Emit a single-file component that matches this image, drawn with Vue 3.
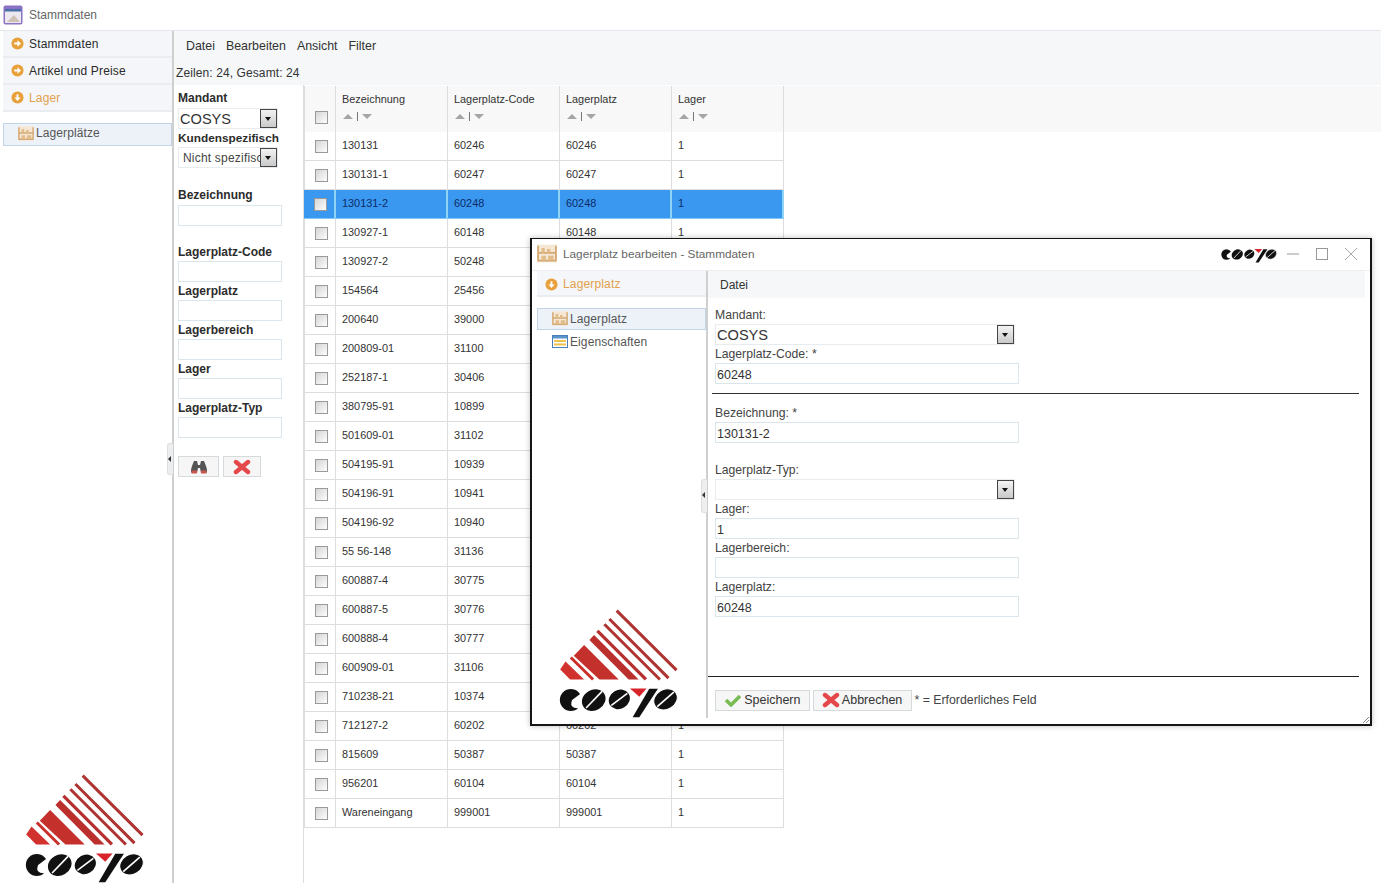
<script setup>
const accordion = [
  { label: 'Stammdaten', open: false },
  { label: 'Artikel und Preise', open: false },
  { label: 'Lager', open: true }
]

const filters = [
  { label: 'Lagerplatz-Code' },
  { label: 'Lagerplatz' },
  { label: 'Lagerbereich' },
  { label: 'Lager' },
  { label: 'Lagerplatz-Typ' }
]

const columns = ['Bezeichnung', 'Lagerplatz-Code', 'Lagerplatz', 'Lager']

// Bezeichnung, Code (Lagerplatz ist gleich dem Code)
const rows = [
  ['130131', '60246'],
  ['130131-1', '60247'],
  ['130131-2', '60248'],
  ['130927-1', '60148'],
  ['130927-2', '50248'],
  ['154564', '25456'],
  ['200640', '39000'],
  ['200809-01', '31100'],
  ['252187-1', '30406'],
  ['380795-91', '10899'],
  ['501609-01', '31102'],
  ['504195-91', '10939'],
  ['504196-91', '10941'],
  ['504196-92', '10940'],
  ['55 56-148', '31136'],
  ['600887-4', '30775'],
  ['600887-5', '30776'],
  ['600888-4', '30777'],
  ['600909-01', '31106'],
  ['710238-21', '10374'],
  ['712127-2', '60202'],
  ['815609', '50387'],
  ['956201', '60104'],
  ['Wareneingang', '999001']
]
</script>

<template>
  <div class="app">
    <!-- gemeinsame Icons -->
    <svg class="defs" aria-hidden="true">
      <symbol id="cosys-word" viewBox="75 275 358 95">
        <ellipse cx="110" cy="316" rx="33" ry="33" fill="#111" />
        <path d="M146 292 L114 316 Q106 332 120 339 L146 343 Z" fill="#fff" />
        <ellipse cx="179" cy="316" rx="37" ry="31" fill="#111" transform="rotate(-30 179 316)" />
        <path d="M156 340 L204 290" stroke="#fff" stroke-width="5" />
        <ellipse cx="256" cy="314" rx="33" ry="28" fill="#111" transform="rotate(-30 256 314)" />
        <path d="M232 332 L280 296" stroke="#fff" stroke-width="5" />
        <path d="M296 368 L316 368 L372 282 L346 282 Z" fill="#111" />
        <path d="M288 281 L338 281 L316 306 Z" fill="#d8232a" />
        <ellipse cx="395" cy="314" rx="37" ry="30" fill="#111" stroke="#fff" stroke-width="3" transform="rotate(-30 395 314)" />
        <path d="M370 336 L420 292" stroke="#fff" stroke-width="5" />
      </symbol>
      <symbol id="cosys-logo" viewBox="60 30 390 340">
        <path d="M248 47 L428 226" stroke="#ae3331" stroke-width="9" />
        <path d="M226 72 L404 250" stroke="#ae3331" stroke-width="9" />
        <path d="M211 88 L378 254" stroke="#ae3331" stroke-width="9" />
        <path d="M190 108 L336 254" stroke="#b5302f" stroke-width="10" />
        <path d="M180 120 L314 254 L284 254 L166 135 Z" fill="#bb2f2d" />
        <path d="M150 150 L254 254 L196 254 L119 183 Z" fill="#c4302c" />
        <path d="M110 188 L177 254" stroke="#c9302c" stroke-width="9" />
        <path d="M78 224 L94 200 L150 254 L108 254 Z" fill="#d2322e" />
        <use href="#cosys-word" x="75" y="275" width="358" height="95" />
      </symbol>
      <symbol id="shelf" viewBox="0 0 18 16">
        <rect x="0" y="0" width="18" height="16" fill="#f5e7d3" />
        <path d="M1 1V15M17 1V15M1 7.5H17M1 14.5H17" stroke="#d3a873" stroke-width="1.6" fill="none" />
        <path d="M4 3h3v4H4zM9 4h3v3H9zM4 10h4v4H4zM10 10h5v4h-5z" fill="#e2bd8c" />
      </symbol>
      <symbol id="props" viewBox="0 0 16 13">
        <rect x="0.5" y="0.5" width="15" height="12" fill="#fff" stroke="#4a7fb8" />
        <rect x="1" y="1" width="14" height="2.5" fill="#5b93cc" />
        <rect x="2" y="5" width="12" height="2" fill="#eec24e" />
        <rect x="2" y="8.5" width="12" height="2" fill="#eec24e" />
      </symbol>
      <symbol id="cross" viewBox="0 0 18 16">
        <path d="M3 3L15 13M15 3L3 13" stroke="#e5484a" stroke-width="4.4" stroke-linecap="round" />
      </symbol>
      <symbol id="check" viewBox="0 0 18 14">
        <path d="M2 7L7 12L16 3" stroke="#79bb55" stroke-width="3.6" fill="none" stroke-linejoin="round" />
      </symbol>
      <symbol id="bullet-right" viewBox="0 0 14 14">
        <circle cx="7" cy="7" r="6.5" fill="#e8a03a" />
        <path d="M3.5 6H7V3.6L10.8 7L7 10.4V8H3.5Z" fill="#fff" />
      </symbol>
      <symbol id="bullet-down" viewBox="0 0 14 14">
        <circle cx="7" cy="7" r="6.5" fill="#e8a03a" />
        <path d="M6 3.5V7H3.6L7 10.8L10.4 7H8V3.5Z" fill="#fff" />
      </symbol>
    </svg>

    <header class="titlebar">
      <svg class="app-icon" viewBox="0 0 20 20">
        <rect x="0.5" y="0.5" width="19" height="19" rx="2" fill="#8a72c4" />
        <rect x="2" y="4" width="16" height="14" fill="#ece8f0" />
        <rect x="2" y="4" width="16" height="2.5" fill="#4a6fa8" />
        <path d="M4 17L11 10L17 17Z" fill="#cfc2b4" />
      </svg>
      <span>Stammdaten</span>
    </header>

    <div class="body">
      <aside class="side">
        <div v-for="item in accordion" :key="item.label" class="acc-head" :class="{ open: item.open }">
          <svg class="bullet"><use :href="item.open ? '#bullet-down' : '#bullet-right'" /></svg>
          <span>{{ item.label }}</span>
        </div>
        <div class="nav-list">
          <div class="nav-item selected">
            <svg class="nav-icon"><use href="#shelf" /></svg>
            <span>Lagerplätze</span>
          </div>
        </div>
        <svg class="logo"><use href="#cosys-logo" /></svg>
      </aside>

      <main class="main">
        <nav class="menubar">
          <span>Datei</span>
          <span>Bearbeiten</span>
          <span>Ansicht</span>
          <span>Filter</span>
        </nav>
        <div class="status">Zeilen: 24, Gesamt: 24</div>

        <div class="content">
          <section class="filter">
            <div class="f-label f-first">Mandant</div>
            <div class="select small">
              <span class="select-text big">COSYS</span>
              <span class="select-btn"></span>
            </div>
            <div class="f-label f-kunden">Kundenspezifisch</div>
            <div class="select small">
              <span class="select-text plain">Nicht spezifisch</span>
              <span class="select-btn"></span>
            </div>
            <div class="f-label f-bez">Bezeichnung</div>
            <input class="input filter-input" />
            <div class="filter-rest">
              <div v-for="f in filters" :key="f.label" class="f-block">
                <div class="f-label">{{ f.label }}</div>
                <input class="input filter-input" />
              </div>
            </div>
            <div class="filter-actions">
              <button class="btn icon-btn search">
                <svg viewBox="0 0 18 15" width="18" height="15">
                  <path d="M2 14Q0 13 2 7L4 2H7L8 6H10L11 2H14L16 7Q18 13 16 14H11L10 9H8L7 14Z" fill="#555" />
                  <path d="M1.5 11.5h5.5v3H1.5zM11 11.5h5.5v3H11z" fill="#c9574e" />
                </svg>
              </button>
              <button class="btn icon-btn clear">
                <svg width="18" height="16"><use href="#cross" /></svg>
              </button>
            </div>
            <div class="grip"><i></i></div>
          </section>

          <section class="grid">
            <div class="g-head">
              <div class="cell check"><span class="box"></span></div>
              <div v-for="col in columns" :key="col" class="cell head-cell">
                <span>{{ col }}</span>
                <span class="sort"><i class="up"></i><b></b><i class="down"></i></span>
              </div>
            </div>
            <div v-for="row in rows" :key="row[0]" class="g-row" :class="{ active: row[0] === '130131-2' }">
              <div class="cell check"><span class="box"></span></div>
              <div class="cell">{{ row[0] }}</div>
              <div class="cell">{{ row[1] }}</div>
              <div class="cell">{{ row[1] }}</div>
              <div class="cell">1</div>
            </div>
          </section>
        </div>
      </main>
    </div>

    <!-- Dialog liegt frei über der Tabelle -->
    <div class="dialog">
      <div class="d-title">
        <svg class="d-icon"><use href="#shelf" /></svg>
        <span class="d-caption">Lagerplatz bearbeiten - Stammdaten</span>
        <svg class="d-word"><use href="#cosys-word" /></svg>
        <svg class="win-btn" viewBox="0 0 14 14"><path d="M1 7H13" stroke="#999" /></svg>
        <svg class="win-btn" viewBox="0 0 14 14"><rect x="1.5" y="1.5" width="11" height="11" fill="none" stroke="#999" /></svg>
        <svg class="win-btn" viewBox="0 0 14 14"><path d="M1 1L13 13M13 1L1 13" stroke="#aaa" /></svg>
      </div>

      <div class="d-body">
        <div class="d-left">
          <div class="acc-head open d-acc">
            <svg class="bullet"><use href="#bullet-down" /></svg>
            <span>Lagerplatz</span>
          </div>
          <div class="d-nav">
            <div class="nav-item selected d-item">
              <svg class="nav-icon"><use href="#shelf" /></svg>
              <span>Lagerplatz</span>
            </div>
            <div class="nav-item d-item">
              <svg class="nav-icon small-icon"><use href="#props" /></svg>
              <span>Eigenschaften</span>
            </div>
          </div>
          <svg class="logo d-logo"><use href="#cosys-logo" /></svg>
        </div>

        <div class="d-right">
          <div class="d-menu"><span>Datei</span></div>
          <div class="form">
            <div class="field">
              <label>Mandant:</label>
              <div class="select wide">
                <span class="select-text big">COSYS</span>
                <span class="select-btn"></span>
              </div>
            </div>
            <div class="field">
              <label>Lagerplatz-Code: *</label>
              <input class="input form-input" value="60248" />
            </div>
            <hr class="rule" />
            <div class="field">
              <label>Bezeichnung: *</label>
              <input class="input form-input" value="130131-2" />
            </div>
            <div class="field typ">
              <label>Lagerplatz-Typ:</label>
              <div class="select wide">
                <span class="select-text big"></span>
                <span class="select-btn"></span>
              </div>
            </div>
            <div class="field">
              <label>Lager:</label>
              <input class="input form-input" value="1" />
            </div>
            <div class="field">
              <label>Lagerbereich:</label>
              <input class="input form-input" />
            </div>
            <div class="field">
              <label>Lagerplatz:</label>
              <input class="input form-input" value="60248" />
            </div>
          </div>
          <div class="d-foot">
            <button class="btn foot-btn">
              <svg width="18" height="14"><use href="#check" /></svg>
              Speichern
            </button>
            <button class="btn foot-btn">
              <svg width="18" height="16"><use href="#cross" /></svg>
              Abbrechen
            </button>
            <span class="hint">* = Erforderliches Feld</span>
          </div>
          <div class="grip d-grip"><i></i></div>
        </div>
      </div>
      <svg class="resize" viewBox="0 0 8 8"><path d="M7 1L1 7M7 4L4 7" stroke="#888" /></svg>
    </div>
  </div>
</template>

<style scoped>
.app {
  position: relative;
  width: 1381px;
  height: 883px;
  overflow: hidden;
  display: flex;
  flex-direction: column;
  background: #fff;
  font-family: "Liberation Sans", Arial, sans-serif;
  font-size: 12px;
  color: #222;
}
.defs {
  position: absolute;
  width: 0;
  height: 0;
}
.titlebar {
  height: 31px;
  box-sizing: border-box;
  flex: none;
  display: flex;
  align-items: center;
  padding: 0 0 0 3px;
  gap: 6px;
  color: #666;
  font-size: 12px;
  border-bottom: 1px solid #e3e7ec;
}
.app-icon {
  width: 20px;
  height: 20px;
}
.body {
  flex: 1;
  display: flex;
  min-height: 0;
}
.side {
  width: 172px;
  flex: none;
  display: flex;
  flex-direction: column;
  box-sizing: border-box;
  padding-left: 3px;
}
.acc-head {
  height: 27px;
  box-sizing: border-box;
  display: flex;
  align-items: center;
  gap: 5px;
  padding-left: 8px;
  background: #f4f6f9;
  border-bottom: 2px solid #e9ecf0;
  color: #2a2a2a;
  font-size: 12px;
  letter-spacing: 0.15px;
}
.acc-head.open {
  color: #e2a14b;
}
.bullet {
  width: 13px;
  height: 13px;
  flex: none;
}
.nav-list {
  padding-top: 11px;
}
.nav-item {
  height: 23px;
  box-sizing: border-box;
  display: flex;
  align-items: center;
  padding-left: 14px;
  padding-bottom: 3px;
  gap: 2px;
  color: #555;
  letter-spacing: 0.1px;
}
.nav-item.selected {
  background: #edf2f9;
  border: 1px solid #c3d3e8;
}
.nav-icon {
  width: 16px;
  height: 15px;
  flex: none;
}
.small-icon {
  height: 13px;
}
.logo {
  width: 130px;
  height: 113px;
  flex: none;
  margin: auto 0 0 17px;
}
.main {
  flex: 1;
  min-width: 0;
  display: flex;
  flex-direction: column;
  border-left: 2px solid #cfcfcf;
}
.menubar {
  height: 27px;
  flex: none;
  display: flex;
  align-items: center;
  gap: 11px;
  padding: 3px 0 0 12px;
  box-sizing: border-box;
  background: #f5f7f9;
  color: #333;
  font-size: 12.4px;
}
.status {
  height: 27px;
  flex: none;
  display: flex;
  align-items: center;
  box-sizing: border-box;
  padding: 2px 0 0 2px;
  background: #f5f7f9;
  color: #333;
  letter-spacing: 0.1px;
}
.content {
  flex: 1;
  display: flex;
  min-height: 0;
}
.filter {
  position: relative;
  width: 130px;
  flex: none;
  box-sizing: border-box;
  padding-left: 4px;
  border-right: 1px solid #ddd;
}
.f-label {
  height: 17px;
  line-height: 17px;
  font-weight: bold;
  color: #2c2c2c;
  white-space: nowrap;
}
.f-first {
  margin-top: 5px;
  height: 18px;
}
.f-kunden {
  height: 18px;
  line-height: 19px;
  margin-top: 0;
  font-size: 11.8px;
}
.f-bez {
  margin-top: 19px;
  height: 18px;
}
.f-block {
  height: 39px;
}
.filter-rest {
  margin-top: 18px;
}
.filter-input {
  width: 104px;
  display: block;
}
.input {
  height: 21px;
  box-sizing: border-box;
  border: 1px solid #d9e6ec;
  background: #fff;
  padding: 0 1px;
  font-family: inherit;
  font-size: 12.5px;
  color: #333;
  outline: none;
}
.select {
  position: relative;
  display: flex;
  align-items: center;
  height: 21px;
  box-sizing: border-box;
  border: 1px solid #e6ecef;
  overflow: hidden;
}
.select.small {
  width: 100px;
}
.select.wide {
  width: 300px;
}
.select-text {
  flex: 1;
  min-width: 0;
  white-space: nowrap;
  overflow: hidden;
}
.select-text.big {
  font-size: 14.6px;
  color: #333;
  padding-left: 1px;
}
.select-text.plain {
  padding-left: 4px;
  font-size: 12px;
  letter-spacing: 0.2px;
  color: #444;
}
.select-btn {
  position: relative;
  flex: none;
  width: 17px;
  height: 19px;
  box-sizing: border-box;
  border: 1px solid #444;
  background: linear-gradient(#f3f3f3, #c9c9c9);
}
.select-btn::after {
  content: "";
  position: absolute;
  left: 4px;
  top: 7px;
  border: 3.5px solid transparent;
  border-top: 4px solid #111;
  border-bottom: 0;
}
.filter-actions {
  display: flex;
  gap: 4px;
  margin-top: 1px;
  padding-top: 16px;
}
.btn {
  display: inline-flex;
  align-items: center;
  justify-content: center;
  box-sizing: border-box;
  height: 21px;
  border: 1px solid #d5dadd;
  background: #f6f6f6;
  font-family: inherit;
  font-size: 12.5px;
  color: #333;
  padding: 0;
}
.icon-btn.search {
  width: 41px;
}
.icon-btn.clear {
  width: 38px;
}
.grip {
  position: absolute;
  left: -7px;
  top: 358px;
  width: 6px;
  height: 32px;
  box-sizing: border-box;
  background: #eceef0;
  border: 1px solid #ddd;
  border-right: 0;
  border-radius: 3px 0 0 3px;
}
.grip i {
  position: absolute;
  left: 0;
  top: 12px;
  border: 3px solid transparent;
  border-right: 3px solid #333;
  border-left: 0;
}
.grid {
  flex: 1;
  min-width: 0;
  padding-top: 1px;
  font-size: 10.9px;
  color: #333;
}
.g-head {
  height: 46px;
  display: flex;
  background: #f8f8f8;
  box-sizing: border-box;
}
.g-row {
  height: 29px;
  display: flex;
  box-sizing: border-box;
  width: 480px;
  border-bottom: 1px solid #ddd;
}
.cell {
  width: 112px;
  flex: none;
  box-sizing: border-box;
  display: flex;
  align-items: center;
  padding-left: 6px;
  border-right: 1px solid #ddd;
}
.g-row .cell {
  padding-bottom: 2px;
}
.cell.check {
  width: 32px;
  padding-left: 10px;
  border-left: 1px solid #ddd;
}
.g-row .cell.check {
  padding-bottom: 0;
}
.head-cell {
  flex-direction: column;
  align-items: flex-start;
  padding-top: 7px;
  gap: 5px;
}
.g-head .check {
  align-items: flex-end;
  padding-bottom: 8px;
}
.box {
  width: 13px;
  height: 13px;
  box-sizing: border-box;
  border: 1px solid #9a9a9a;
  background: linear-gradient(135deg, #d5d5d5, #fdfdfd);
}
.sort {
  display: flex;
  align-items: center;
  gap: 4px;
  height: 12px;
  padding-left: 1px;
}
.sort b {
  width: 1px;
  height: 9px;
  background: #777;
}
.sort .up,
.sort .down {
  border: 5px solid transparent;
  border-top-width: 0;
  border-bottom: 5px solid #a5a5a5;
}
.sort .down {
  border-bottom-width: 0;
  border-top: 5px solid #a5a5a5;
  border-top-width: 5px;
}
.g-row.active {
  border-bottom-color: #7fc9f2;
}
.g-row.active .cell {
  background: #3b98f0;
  color: #0c2c66;
  border-right: 2px solid #8fd3f7;
}
.g-row.active .check {
  border-left: 0;
}
.dialog {
  position: absolute;
  left: 530px;
  top: 238px;
  width: 842px;
  height: 488px;
  box-sizing: border-box;
  border: 2px solid #151515;
  border-top-width: 1px;
  background: #fff;
  display: flex;
  flex-direction: column;
  box-shadow: 0 0 6px rgba(0, 0, 0, 0.25);
}
.d-title {
  height: 32px;
  flex: none;
  display: flex;
  align-items: center;
  padding: 0 0 2px 5px;
  box-sizing: border-box;
  border-bottom: 1px solid #eceff2;
}
.d-icon {
  width: 20px;
  height: 19px;
  flex: none;
}
.d-caption {
  margin-left: 6px;
  color: #666;
  font-size: 11.8px;
  flex: 1;
}
.d-word {
  width: 56px;
  height: 15px;
  margin: 3px 9px 0 0;
}
.win-btn {
  width: 14px;
  height: 14px;
  margin-right: 15px;
}
.win-btn:last-child {
  margin-right: 12px;
}
.d-body {
  flex: 1;
  display: flex;
  min-height: 0;
  padding-bottom: 6px;
}
.d-left {
  width: 174px;
  flex: none;
  display: flex;
  flex-direction: column;
  padding-left: 5px;
  box-sizing: border-box;
}
.d-acc {
  height: 26px;
  padding-top: 2px;
}
.d-nav {
  padding-top: 11px;
}
.d-item {
  height: 22px;
  padding-left: 14px;
  padding-bottom: 1px;
  margin-bottom: 1px;
}
.d-item + .d-item {
  padding-left: 15px;
}
.d-logo {
  margin-left: 17px;
}
.d-right {
  position: relative;
  flex: 1;
  min-width: 0;
  display: flex;
  flex-direction: column;
  border-left: 2px solid #cfcfcf;
}
.d-menu {
  height: 27px;
  flex: none;
  display: flex;
  align-items: center;
  padding-left: 12px;
  margin-right: 5px;
  background: #f5f7f9;
  color: #333;
}
.form {
  flex: 1;
  padding: 9px 0 0 7px;
}
.field {
  height: 39px;
}
.field label {
  display: block;
  height: 17px;
  line-height: 14px;
  padding-top: 1px;
  box-sizing: border-box;
  color: #444;
  font-size: 12.2px;
}
.field.typ {
  margin-top: 18px;
}
.form-input {
  width: 304px;
  display: block;
  padding-top: 2px;
}
.rule {
  margin: 8px 11px 11px -3px;
  border: 0;
  border-top: 1px solid #333;
}
.d-foot {
  height: 42px;
  flex: none;
  box-sizing: border-box;
  margin: 0 11px 0 0;
  padding: 13px 0 0 7px;
  border-top: 1px solid #222;
  display: flex;
  align-items: flex-start;
  gap: 3px;
}
.foot-btn {
  padding: 0 8.2px 1px;
  gap: 2px;
}
.hint {
  color: #444;
  line-height: 21px;
  font-size: 12.3px;
}
.d-grip {
  left: -7px;
  top: 208px;
  height: 34px;
}
.resize {
  position: absolute;
  right: 0;
  bottom: 0;
  width: 8px;
  height: 8px;
}
</style>

<style>
html,
body {
  margin: 0;
  background: #fff;
}
</style>
